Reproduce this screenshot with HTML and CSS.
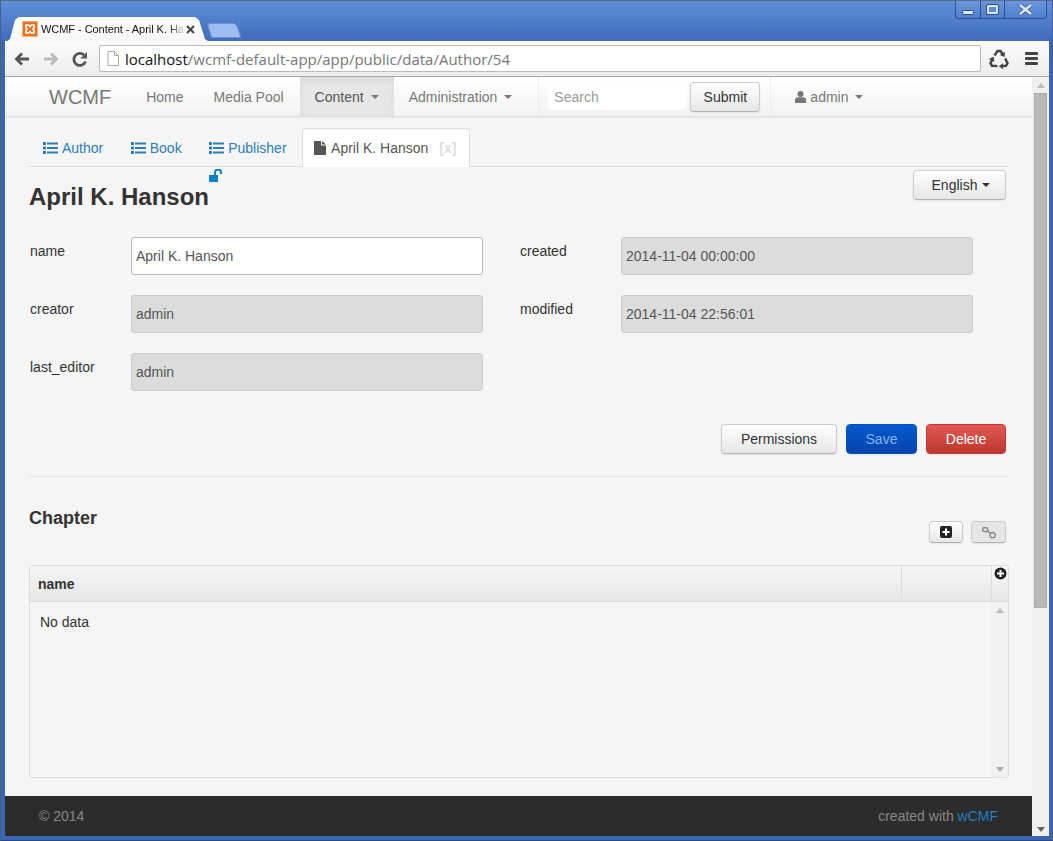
FILE: index.html
```html
<!DOCTYPE html>
<html lang="en">
<head>
    <meta charset="UTF-8">
    <title>WCMF - Content - April K. Hanson</title>
    <link rel="stylesheet" href="styles.css">
</head>
<body>
<div class="window">
    <div class="titlebar">
        <div class="tab-strip">
            <div class="chrome-tab">
                <svg class="favicon" width="16" height="16" viewBox="0 0 16 16"><rect width="16" height="16" rx="2" fill="#e8701e"/><rect x=".5" y=".5" width="15" height="15" rx="2" fill="none" stroke="#f7b27c"/><path d="M4 4h2.500L8 5.500 9.500 4H12v3l-1 1 1 1v3H9.500L8 10.500 6.500 12H4V9l1-1-1-1z" fill="none" stroke="#fff" stroke-width="1.600"/></svg>
                <span class="chrome-tab-title">WCMF - Content - April K. Ha</span>
                <svg class="chrome-tab-close" width="9" height="9" viewBox="0 0 9 9"><path d="M1 1l7 7M8 1L1 8" stroke="#444" stroke-width="2"/></svg>
            </div>
            <div class="new-tab"></div>
        </div>
        <div class="win-controls">
            <span class="win-btn win-min"><i></i></span>
            <span class="win-btn win-max"><i></i></span>
            <span class="win-btn win-close"><svg width="15" height="11" viewBox="0 0 15 11"><path d="M2 1l11 9M13 1L2 10" stroke="#3a5a8f" stroke-width="4"/><path d="M2 1l11 9M13 1L2 10" stroke="#dfe8f6" stroke-width="2.400"/></svg></span>
        </div>
    </div>

    <div class="toolbar">
        <svg class="tool-icon" width="20" height="20" viewBox="0 0 20 20"><path d="M17 10H6M10 4.500L4.500 10l5.500 5.500" fill="none" stroke="#555" stroke-width="2.800"/></svg>
        <svg class="tool-icon" width="20" height="20" viewBox="0 0 20 20"><path d="M3 10h11M10 4.500l5.500 5.500-5.500 5.500" fill="none" stroke="#bbb" stroke-width="2.800"/></svg>
        <svg class="tool-icon" width="20" height="20" viewBox="0 0 20 20"><path d="M15.500 12.500A6 6 0 1 1 14 6" fill="none" stroke="#555" stroke-width="2.800"/><path d="M17 3v6.500h-6.500z" fill="#555"/></svg>
        <div class="address">
            <svg width="12" height="15" viewBox="0 0 12 15"><path d="M1 .5h6.500l4 4v10H1z" fill="#fff" stroke="#aaa"/><path d="M7.500.5v4h4" fill="none" stroke="#aaa"/></svg>
            <span class="url"><b>localhost</b>/wcmf-default-app/app/public/data/Author/54</span>
        </div>
        <svg class="tool-icon recycle" width="20" height="20" viewBox="0 0 20 20">
            <g><path d="M5.500 6.500L8.500 2h3l2 3.200" fill="none" stroke="#444" stroke-width="2.400"/><path d="M16 2.800l-.5 5.200-4.700-1.900z" fill="#444"/></g>
            <g transform="rotate(120 10 11)"><path d="M5.500 6.500L8.500 2h3l2 3.200" fill="none" stroke="#444" stroke-width="2.400"/><path d="M16 2.800l-.5 5.200-4.700-1.900z" fill="#444"/></g>
            <g transform="rotate(240 10 11)"><path d="M5.500 6.500L8.500 2h3l2 3.200" fill="none" stroke="#444" stroke-width="2.400"/><path d="M16 2.800l-.5 5.200-4.700-1.900z" fill="#444"/></g>
        </svg>
        <div class="hamburger"><i></i><i></i><i></i></div>
    </div>

    <div class="viewport">
        <div class="page">
            <nav class="navbar">
                <span class="brand">WCMF</span>
                <a class="nav-item">Home</a>
                <a class="nav-item">Media Pool</a>
                <a class="nav-item active">Content <i class="caret"></i></a>
                <a class="nav-item">Administration <i class="caret"></i></a>
                <div class="nav-search">
                    <span class="search-input">Search</span>
                    <span class="btn search-btn">Submit</span>
                </div>
                <a class="nav-item nav-user">
                    <svg width="11" height="12" viewBox="0 0 11 12"><circle cx="5.500" cy="3" r="3" fill="#777"/><path d="M0 12V9q0-2.500 3-2.800h5q3 .3 3 2.800v3z" fill="#777"/></svg>
                    admin <i class="caret"></i>
                </a>
            </nav>

            <div class="content">
                <ul class="tabs">
                    <li class="tab"><svg class="list-icon" width="15" height="12" viewBox="0 0 15 12"><path d="M0 0h3v3H0zM4 .5h11v2H4zM0 4.500h3v3H0zM4 5h11v2H4zM0 9h3v3H0zM4 9.500h11v2H4z" fill="#2a7fb8"/></svg>Author</li>
                    <li class="tab"><svg class="list-icon" width="15" height="12" viewBox="0 0 15 12"><path d="M0 0h3v3H0zM4 .5h11v2H4zM0 4.500h3v3H0zM4 5h11v2H4zM0 9h3v3H0zM4 9.500h11v2H4z" fill="#2a7fb8"/></svg>Book</li>
                    <li class="tab"><svg class="list-icon" width="15" height="12" viewBox="0 0 15 12"><path d="M0 0h3v3H0zM4 .5h11v2H4zM0 4.500h3v3H0zM4 5h11v2H4zM0 9h3v3H0zM4 9.500h11v2H4z" fill="#2a7fb8"/></svg>Publisher</li>
                    <li class="tab tab-active"><svg width="12" height="14" viewBox="0 0 12 14"><path d="M0 0h7v4.500h5V14H0zM8 0l4 3.500H8z" fill="#555"/></svg>April K. Hanson <span class="tab-x">[x]</span></li>
                </ul>

                <div class="title-row">
                    <h1 class="obj-title">April K. Hanson<svg class="lock" width="14" height="13" viewBox="0 0 14 13"><path d="M0 6h9v7H0z" fill="#0b7fc7"/><path d="M6 6V3.500a3 3 0 0 1 6 0V5" fill="none" stroke="#0b7fc7" stroke-width="2"/></svg></h1>
                    <span class="btn lang-btn">English <i class="caret dark"></i></span>
                </div>

                <div class="form-grid">
                    <label>name</label><span class="field editable">April K. Hanson</span>
                    <label>created</label><span class="field">2014-11-04 00:00:00</span>
                    <label>creator</label><span class="field">admin</span>
                    <label>modified</label><span class="field">2014-11-04 22:56:01</span>
                    <label>last_editor</label><span class="field">admin</span>
                </div>

                <div class="actions">
                    <span class="btn perm-btn">Permissions</span>
                    <span class="btn save-btn"><span class="focus-ring">Save</span></span>
                    <span class="btn delete-btn">Delete</span>
                </div>

                <hr class="divider">

                <div class="rel-head">
                    <h2>Chapter</h2>
                    <div class="rel-btns">
                        <span class="btn mini-btn"><svg width="12" height="12" viewBox="0 0 12 12"><rect width="12" height="12" rx="2" fill="#222"/><path d="M5 2.500h2V5h2.500v2H7v2.500H5V7H2.500V5H5z" fill="#fff"/></svg></span>
                        <span class="btn mini-btn muted"><svg width="14" height="13" viewBox="0 0 14 13"><path d="M2 1.500l3 .5 1 2.500-2 1.500-3-1-.5-2.500zM8.500 7l3-.5 2 2-1 3-3 .5-1.500-2.500z" fill="none" stroke="#888" stroke-width="1.400"/><path d="M5.500 5l3 2.500" stroke="#888" stroke-width="1.400"/></svg></span>
                    </div>
                </div>

                <div class="grid-box">
                    <div class="grid-head">
                        <span class="col-name">name</span>
                        <span class="col-actions"></span>
                        <span class="col-add"><svg width="13" height="13" viewBox="0 0 13 13"><circle cx="6.500" cy="6.500" r="6" fill="#222"/><path d="M5.500 3h2v2.500H10v2H7.500V10h-2V7.500H3v-2h2.500z" fill="#fff"/></svg></span>
                    </div>
                    <div class="grid-body">
                        <div class="grid-msg">No data</div>
                        <div class="grid-scroll"><i class="arrow up"></i><i class="arrow down"></i></div>
                    </div>
                </div>
            </div>

            <footer class="footer">
                <span>&copy; 2014</span>
                <span>created with <a class="footer-link">wCMF</a></span>
            </footer>
        </div>
        <div class="scrollbar">
            <i class="arrow up"></i>
            <div class="thumb"></div>
            <i class="arrow down dark"></i>
        </div>
    </div>
</div>
</body>
</html>
```

FILE: styles.css
```css
* {
    box-sizing: border-box;
}
body {
    margin: 0;
    font-family: "Liberation Sans", Arial, sans-serif;
    font-size: 14px;
    color: #333;
}
.window {
    width: 1053px;
    height: 841px;
    padding: 0 3px 4px 4px;
    background: #3d66b0;
    border: 1px solid #4a5f85;
    border-bottom-color: #2d4a80;
    border-top-color: #5a6a88;
    display: flex;
    flex-direction: column;
    overflow: hidden;
}

/* browser frame */
.titlebar {
    height: 40px;
    margin: 0 -3px 0 -4px;
    padding-left: 6px;
    background: linear-gradient(to bottom, #5f8fd8, #3f6cbc);
    display: flex;
    justify-content: space-between;
    align-items: flex-start;
    flex: none;
}
.tab-strip {
    display: flex;
    align-items: flex-end;
    height: 40px;
}
.chrome-tab {
    width: 201px;
    height: 24px;
    background: linear-gradient(to bottom, #fff, #f6f6f6);
    clip-path: polygon(0 100%, 3px 22px, 8px 3px, 12px 0, 188px 0, 192px 3px, 198px 22px, 100% 100%);
    display: flex;
    align-items: center;
    padding: 0 13px 0 15px;
    color: #111;
}
.favicon {
    flex: none;
    margin-right: 3px;
}
.chrome-tab-title {
    flex: 1;
    white-space: nowrap;
    font-size: 11px;
    letter-spacing: -.05px;
    -webkit-mask-image: linear-gradient(to right, #000 88%, transparent 100%);
    mask-image: linear-gradient(to right, #000 88%, transparent 100%);
}
.chrome-tab-close {
    flex: none;
}
.new-tab {
    width: 30px;
    height: 15px;
    margin: 0 0 3px 1px;
    background: #9dbdee;
    border: 1px solid #6d93d4;
    border-radius: 4px 4px 2px 2px;
    transform: skewX(18deg);
}
.win-controls {
    display: flex;
    height: 18px;
    margin-right: 5px;
    border: 1px solid #2f4f85;
    border-top: none;
    border-radius: 0 0 4px 4px;
    background: linear-gradient(to bottom, #6a97dc, #5080cc);
}
.win-btn {
    display: flex;
    align-items: center;
    justify-content: center;
    border-right: 1px solid #2f4f85;
    height: 100%;
}
.win-min {
    width: 25px;
}
.win-min i {
    width: 12px;
    height: 5px;
    margin-top: 6px;
    background: #dbe6f7;
    border: 1px solid #344f80;
    border-radius: 2px;
}
.win-max {
    width: 24px;
}
.win-max i {
    width: 11px;
    height: 9px;
    border: 2px solid #dbe6f7;
    outline: 1px solid #344f80;
    border-radius: 1px;
}
.win-close {
    width: 41px;
    border-right: none;
}
.toolbar {
    height: 36px;
    flex: none;
    background: linear-gradient(to bottom, #fbfbfb, #ececec);
    border-bottom: 1px solid #aaa;
    display: flex;
    align-items: center;
    padding: 0 9px 0 7px;
}
.tool-icon {
    flex: none;
    margin-right: 9px;
}
.address {
    width: 882px;
    height: 27px;
    background: #fff;
    border: 1px solid #bbb;
    border-radius: 2px;
    display: flex;
    align-items: center;
    padding-left: 7px;
    gap: 6px;
}
.url {
    font-family: "Open Sans", "Liberation Sans", sans-serif;
    font-size: 15px;
    color: #777;
    white-space: nowrap;
}
.url b {
    font-weight: normal;
    color: #111;
}
.recycle {
    margin: 0 0 0 8px;
}
.hamburger {
    margin-left: 16px;
    width: 13px;
    display: flex;
    flex-direction: column;
    gap: 2px;
}
.hamburger i {
    height: 3px;
    background: #444;
    border-radius: 1px;
}

.viewport {
    flex: 1;
    display: flex;
    min-height: 0;
}
.page {
    flex: 1;
    display: flex;
    flex-direction: column;
    background: #f5f5f5;
    min-width: 0;
}
.scrollbar {
    width: 17px;
    flex: none;
    background: #f0f0f0;
    display: flex;
    flex-direction: column;
    align-items: center;
    padding-top: 6px;
}
.thumb {
    width: 13px;
    height: 515px;
    margin-top: 5px;
    background: #b8b8b8;
    border: 1px solid #aaa;
}
.scrollbar .down {
    margin-top: auto;
    margin-bottom: 4px;
}
.arrow {
    display: block;
    width: 0;
    height: 0;
    border-left: 4px solid transparent;
    border-right: 4px solid transparent;
}
.arrow.up {
    border-bottom: 5px solid #bbb;
}
.arrow.down {
    border-top: 5px solid #aaa;
}
.arrow.down.dark {
    border-top-color: #666;
}

/* navbar */
.navbar {
    height: 40px;
    flex: none;
    display: flex;
    align-items: stretch;
    padding-left: 44px;
    background: linear-gradient(to bottom, #fff, #f2f2f2);
    border-bottom: 1px solid #ddd;
    box-shadow: 0 1px 3px rgba(0, 0, 0, .05);
}
.brand {
    font-size: 20px;
    line-height: 40px;
    color: #777;
    margin-right: 20px;
}
.nav-item {
    display: flex;
    align-items: center;
    padding: 0 15px;
    color: #777;
    gap: 5px;
}
.nav-item:nth-of-type(2) {
    padding-right: 16px;
}
.nav-item.active {
    background: #e7e7e7;
    color: #555;
    box-shadow: inset 0 3px 8px rgba(0, 0, 0, .06);
}
.caret {
    display: inline-block;
    width: 0;
    height: 0;
    margin-left: 2px;
    border-top: 4px solid #777;
    border-left: 4px solid transparent;
    border-right: 4px solid transparent;
}
.caret.dark {
    margin-left: 0;
    border-top-color: #333;
}
.nav-search {
    display: flex;
    align-items: center;
    gap: 4px;
    padding: 0 10px 0 9px;
    margin-left: 11px;
    border-left: 1px solid #ececec;
    border-right: 1px solid #ececec;
}
.search-input {
    width: 138px;
    height: 25px;
    line-height: 25px;
    margin-top: 2px;
    padding-left: 6px;
    color: #999;
    background: #fff;
    border-radius: 4px;
}
.nav-user {
    padding-left: 24px;
    gap: 4px;
}
.btn {
    display: inline-flex;
    align-items: center;
    justify-content: center;
    gap: 5px;
    border: 1px solid #ccc;
    border-bottom-color: #b3b3b3;
    border-radius: 4px;
    color: #333;
    background: linear-gradient(to bottom, #fff, #e6e6e6);
    box-shadow: 0 1px 2px rgba(0, 0, 0, .08);
}
.search-btn {
    width: 70px;
    height: 30px;
}

/* main content */
.content {
    flex: 1;
    padding: 11px 24px 0;
    min-height: 0;
}
.tabs {
    list-style: none;
    margin: 0;
    padding: 0;
    height: 39px;
    display: flex;
    align-items: stretch;
    border-bottom: 1px solid #ddd;
}
.tab {
    display: flex;
    align-items: center;
    padding: 2px 13.500px 0 14px;
    gap: 4px;
    color: #2a7fb8;
    height: 38px;
}
.list-icon {
    flex: none;
}
.tab-active {
    height: 39px;
    margin-left: 2px;
    padding: 0 13px 0 11px;
    gap: 5px;
    color: #555;
    background: #fff;
    border: 1px solid #ddd;
    border-bottom: none;
    border-radius: 4px 4px 0 0;
}
.tab-x {
    margin-left: 6px;
    color: #ddd;
    font-weight: bold;
    font-size: 14px;
}
.title-row {
    display: flex;
    justify-content: space-between;
    align-items: flex-start;
    height: 70px;
    padding-top: 3px;
    padding-right: 2px;
}
.obj-title {
    margin: 13px 0 0;
    font-size: 24px;
    line-height: 28px;
    font-weight: bold;
    color: #333;
    position: relative;
}
.lock {
    position: absolute;
    top: -14px;
}
.lang-btn {
    width: 93px;
    height: 30px;
    padding-left: 3px;
}
.form-grid {
    display: grid;
    grid-template-columns: 102px 352px 138px 352px;
    grid-auto-rows: 38px;
    row-gap: 20px;
    column-gap: 0;
}
.form-grid label {
    padding: 6px 0 0 1px;
    color: #333;
}
.form-grid label:nth-child(4n+3) {
    padding-left: 37px;
}
.field {
    display: flex;
    align-items: center;
    padding-left: 4px;
    color: #555;
    background: #dcdcdc;
    border: 1px solid #ccc;
    border-radius: 3px;
}
.field.editable {
    background: #fff;
    border-color: #bbb;
}
.actions {
    display: flex;
    justify-content: flex-end;
    gap: 9px;
    margin-top: 33px;
    padding-right: 2px;
}
.actions .btn {
    height: 30px;
}
.perm-btn {
    width: 116px;
}
.save-btn {
    width: 71px;
    color: #82b4f5;
    border-color: #0a4fb5;
    background: linear-gradient(to bottom, #0758cf, #0344ad);
}
.focus-ring {
    outline: 1px dotted #1c5cbc;
    padding: 1px 1px;
}
.delete-btn {
    width: 80px;
    color: #fff;
    border-color: #bd3a36;
    background: linear-gradient(to bottom, #e25a52, #bd362f);
}
.divider {
    margin: 22px 0 0;
    border: none;
    border-top: 1px solid #e3e3e3;
}
.rel-head {
    display: flex;
    justify-content: space-between;
    height: 88px;
}
.rel-head h2 {
    margin: 31px 0 0;
    font-size: 18px;
    line-height: 20px;
    color: #333;
}
.rel-btns {
    display: flex;
    gap: 8px;
    margin-top: 44px;
    padding-right: 2px;
    height: 22px;
}
.mini-btn {
    width: 34px;
}
.mini-btn.muted {
    width: 35px;
    background: #e6e6e6;
}
.grid-box {
    height: 213px;
    margin-right: -1px;
    border: 1px solid #ddd;
    border-radius: 3px;
    display: flex;
    flex-direction: column;
}
.grid-head {
    height: 36px;
    flex: none;
    display: flex;
    background: linear-gradient(to bottom, #f6f6f6, #e6e6e6);
    border-bottom: 1px solid #ddd;
}
.col-name {
    width: 872px;
    padding: 10px 0 0 8px;
    font-weight: bold;
    border-right: 1px solid #ddd;
}
.col-actions {
    width: 90px;
    border-right: 1px solid #ddd;
}
.col-add {
    flex: 1;
    padding: 1px 0 0 2px;
    line-height: 0;
}
.grid-body {
    flex: 1;
    display: flex;
    min-height: 0;
}
.grid-msg {
    flex: 1;
    padding: 12px 0 0 10px;
}
.grid-scroll {
    width: 17px;
    background: #f1f1f1;
    display: flex;
    flex-direction: column;
    justify-content: space-between;
    align-items: center;
    padding: 6px 0 5px;
}
.footer {
    height: 40px;
    flex: none;
    display: flex;
    justify-content: space-between;
    align-items: center;
    padding: 0 34px;
    color: #888;
    background: #2c2c2c;
}
.footer-link {
    color: #1f7fc4;
}
```
